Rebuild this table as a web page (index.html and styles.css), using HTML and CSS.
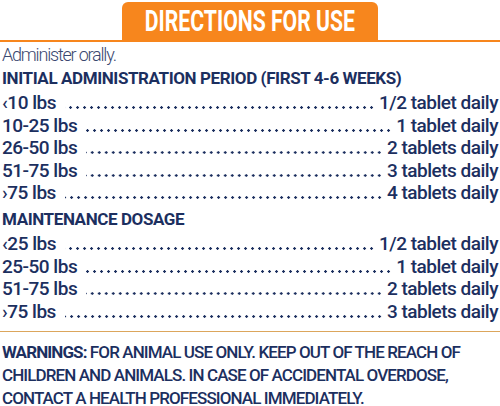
FILE: index.html
```html
<!DOCTYPE html>
<html lang="en">
<head>
  <meta charset="UTF-8">
  <meta name="viewport" content="width=device-width, initial-scale=1.0">
  <title>Directions for Use</title>
  <link rel="stylesheet" href="styles.css">
</head>
<body>
  <div class="label">
    <div class="tab-row">
      <h1 class="tab"><span>DIRECTIONS FOR USE</span></h1>
    </div>
    <p class="intro">Administer orally.</p>
    <h2 class="section">INITIAL ADMINISTRATION PERIOD (FIRST 4-6 WEEKS)</h2>
    <ul class="doses">
      <li><span class="wt">&lsaquo;10 lbs</span><span class="dots"></span><span class="amt">1/2 tablet daily</span></li>
      <li><span class="wt">10-25 lbs</span><span class="dots"></span><span class="amt">1 tablet daily</span></li>
      <li><span class="wt">26-50 lbs</span><span class="dots"></span><span class="amt">2 tablets daily</span></li>
      <li><span class="wt">51-75 lbs</span><span class="dots"></span><span class="amt">3 tablets daily</span></li>
      <li><span class="wt">&rsaquo;75 lbs</span><span class="dots"></span><span class="amt">4 tablets daily</span></li>
    </ul>
    <h2 class="section second">MAINTENANCE DOSAGE</h2>
    <ul class="doses">
      <li><span class="wt">&lsaquo;25 lbs</span><span class="dots"></span><span class="amt">1/2 tablet daily</span></li>
      <li><span class="wt">25-50 lbs</span><span class="dots"></span><span class="amt">1 tablet daily</span></li>
      <li><span class="wt">51-75 lbs</span><span class="dots"></span><span class="amt">2 tablets daily</span></li>
      <li><span class="wt">&rsaquo;75 lbs</span><span class="dots"></span><span class="amt">3 tablets daily</span></li>
    </ul>
    <hr class="rule">
    <p class="warn"><strong>WARNINGS:</strong> FOR ANIMAL USE ONLY. KEEP OUT OF THE REACH OF<br>CHILDREN AND ANIMALS. IN CASE OF ACCIDENTAL OVERDOSE,<br>CONTACT A HEALTH PROFESSIONAL IMMEDIATELY.</p>
  </div>
</body>
</html>
```

FILE: styles.css
```css
body {
  margin: 0;
  background: #fff;
  font-family: Roboto, 'Liberation Sans', sans-serif;
  color: #1c2f5f;
}
.label {
  padding: 0 2px;
}
.tab-row {
  display: flex;
  justify-content: center;
  border-bottom: 2px solid #f7861d;
  margin: 0 -2px;
  padding-top: 2px;
}
.tab {
  margin: 0;
  width: 256px;
  height: 38px;
  background: #f7861d;
  border-radius: 6px 6px 0 0;
  color: #fff;
  display: flex;
  align-items: center;
  justify-content: center;
  font-size: 29px;
  font-weight: 700;
  line-height: 1;
}
.tab span {
  display: inline-block;
  transform: scaleX(0.73);
  white-space: nowrap;
}
.intro {
  margin: 2px 0 0;
  font-size: 18px;
  font-weight: 300;
  line-height: 22.5px;
  letter-spacing: -1.2px;
  color: #3a4870;
}
.section {
  margin: 0;
  font-size: 17px;
  font-weight: 700;
  line-height: 22.5px;
  letter-spacing: -0.4px;
}
.section.second {
  margin-top: 3px;
}
.doses {
  list-style: none;
  margin: 0;
  padding: 3px 0 0;
}
.doses li {
  display: flex;
  align-items: baseline;
  font-size: 19px;
  font-weight: 500;
  line-height: 22.5px;
  letter-spacing: -0.5px;
}
.dots {
  flex: 1;
  height: 3px;
  margin: 0 4px 0 9px;
  background-image: radial-gradient(circle, #1c2f5f 1px, transparent 1.5px);
  background-size: 7px 3px;
  background-repeat: repeat-x;
  background-position: right bottom;
}
.rule {
  border: none;
  border-top: 1px solid #dca65c;
  margin: 8px -2px 9px;
}
.warn {
  margin: 0;
  font-size: 17px;
  font-weight: 500;
  line-height: 23px;
  letter-spacing: -0.9px;
}
.warn strong {
  font-weight: 700;
}
```
